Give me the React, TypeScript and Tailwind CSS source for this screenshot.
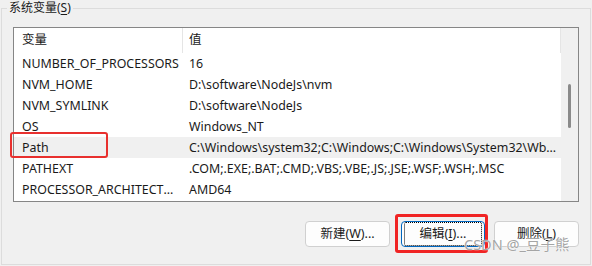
import React from 'react'

const rows: { name: string; value: string }[] = [
  { name: 'NUMBER_OF_PROCESSORS', value: '16' },
  { name: 'NVM_HOME', value: 'D:\\software\\NodeJs\\nvm' },
  { name: 'NVM_SYMLINK', value: 'D:\\software\\NodeJs' },
  { name: 'OS', value: 'Windows_NT' },
  { name: 'Path', value: 'C:\\Windows\\system32;C:\\Windows;C:\\Windows\\System32\\Wbem;C:\\Windows\\System32\\WindowsPowerShell' },
  { name: 'PATHEXT', value: '.COM;.EXE;.BAT;.CMD;.VBS;.VBE;.JS;.JSE;.WSF;.WSH;.MSC' },
  { name: 'PROCESSOR_ARCHITECTURE', value: 'AMD64' },
]

function Btn({ label, hot, rest, focused = false }: { label: string; hot: string; rest: string; focused?: boolean }) {
  return (
    <div
      className={`flex h-[26px] items-center justify-center rounded-[4px] bg-[#fdfdfd] ${
        focused ? 'border border-[#0067c0]' : 'border border-[#d0d0d0]'
      }`}
    >
      <div
        className={`flex h-full w-full items-center justify-center rounded-[2px] ${
          focused ? 'm-[2px] border border-dotted border-black' : ''
        }`}
      >
        <span>
          {label}(<span className="underline underline-offset-2">{hot}</span>){rest}
        </span>
      </div>
    </div>
  )
}

export default function App() {
  return (
    <div className="relative h-[266px] w-[592px] overflow-hidden bg-[#f0f0f0] font-['Noto_Sans','Noto_Sans_CJK_SC',sans-serif] text-[12.4px] text-[#1a1a1a]">
      {/* 分组框 */}
      <div className="ml-[1px] mt-[8px] flex h-[257px] w-[590px] flex-col border border-[#dcdcdc]">
        <div className="absolute left-[7px] top-0 bg-[#f0f0f0] px-[2px] text-[12px] leading-[16px]">
          系统变量(<span className="underline underline-offset-2">S</span>)
        </div>

        {/* 列表 */}
        <div className="ml-[11px] mt-[18px] flex h-[175px] w-[566px] border border-[#868686] bg-white">
          <div className="flex min-w-0 flex-1 flex-col">
            <div className="flex h-[25px] shrink-0 items-center text-[12.5px]">
              <div className="flex h-full w-[169px] items-center border-r border-[#e5e5e5] pl-[8px]">变量</div>
              <div className="flex h-full flex-1 items-center border-r border-[#e5e5e5] pl-[6px]">值</div>
            </div>
            {rows.map((r) => (
              <div
                key={r.name}
                className={`flex h-[21px] shrink-0 items-center leading-[16px] ${r.name === 'Path' ? 'bg-[#f0f0f0]' : ''}`}
              >
                <div className="w-[169px] truncate pl-[8px] pr-[2px]">{r.name}</div>
                <div className="min-w-0 flex-1 truncate pl-[6px] pr-[4px]">{r.value}</div>
              </div>
            ))}
          </div>
          {/* 滚动条 */}
          <div className="flex w-[17px] shrink-0 justify-center bg-[#f0f0f0] pt-[56px]">
            <div className="h-[44px] w-[3px] rounded-full bg-[#8a8a8a]" />
          </div>
        </div>

        {/* 按钮 */}
        <div className="mt-[19px] flex justify-end gap-[9px] pr-[11px] text-[12.5px]">
          <div className="mr-[2px] w-[85px]">
            <Btn label="新建" hot="W" rest="..." />
          </div>
          <div className="w-[84px]">
            <Btn label="编辑" hot="I" rest="..." focused />
          </div>
          <div className="w-[85px]">
            <Btn label="删除" hot="L" rest="" />
          </div>
        </div>
      </div>

      {/* 标注框 */}
      <div className="absolute left-[10px] top-[132px] h-[26px] w-[98px] rounded-[3px] border-2 border-[#e8302e]" />
      <div className="absolute left-[395px] top-[214px] h-[39px] w-[93px] rounded-[3px] border-[3px] border-[#f02424]" />

      {/* 水印 */}
      <div className="absolute left-[464px] top-[235px] text-[14.5px] leading-[18px] text-[#8c8c8c]/80 [text-shadow:0_0_1px_#fff,0_0_1px_#fff]">
        CSDN @_豆子熊
      </div>
    </div>
  )
}
